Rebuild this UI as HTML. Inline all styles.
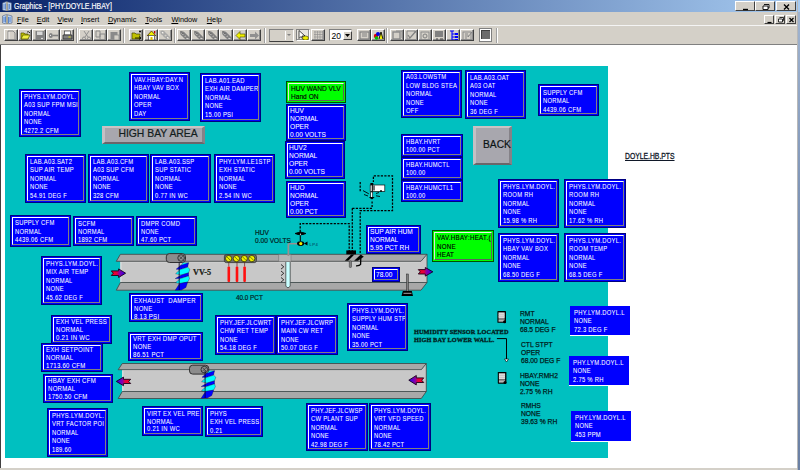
<!DOCTYPE html><html><head><meta charset="utf-8"><style>

*{margin:0;padding:0;box-sizing:border-box}
html,body{width:800px;height:470px;overflow:hidden;background:#fff}
body{position:relative;font-family:"Liberation Sans",sans-serif}
.a{position:absolute}
#title{left:0;top:0;width:797px;height:12px;background:linear-gradient(to right,#0a246a 0%,#a6caf0 100%)}
#title .tt{position:absolute;left:14.2px;top:1.2px;font-size:8.3px;line-height:11px;color:#fff;white-space:nowrap;transform-origin:0 0;transform:scaleX(0.845);-webkit-text-stroke:0.15px #fff}
#menu{left:0;top:12px;width:797px;height:14px;background:#d4d0c8;border-bottom:1px solid #f4f4f4}
#menu span{position:absolute;top:2.6px;font-size:7.3px;line-height:9px;color:#000;white-space:nowrap}
#menu u{text-decoration:underline;text-underline-offset:1px;text-decoration-thickness:0.7px}
#tool{left:0;top:26px;width:797px;height:19px;background:#d4d0c8;border-bottom:1px solid #808080}
.btn{position:absolute;top:2.6px;width:14px;height:12.6px;border-top:1px solid #fff;border-left:1px solid #fff;border-right:1px solid #404040;border-bottom:1px solid #404040;box-shadow:inset -1px -1px 0 #909090;overflow:hidden}
.btn svg{position:absolute;left:1px;top:0.5px}
.sep{position:absolute;top:2px;width:2px;height:15px;border-left:1px solid #a0a0a0;border-right:1px solid #fff}
#canvas{left:0;top:45px;width:797px;height:423px;background:#fff;border-left:1px solid #404040}
#cyan{left:5px;top:66px;width:603px;height:392px;background:#00c0c0}
.bx{position:absolute;background:#0000ff;border:1px solid #000080}
.bx::before{content:"";position:absolute;left:1px;top:1px;right:1px;bottom:1px;border-top:1px solid #fff;border-left:1px solid #fff;border-right:1px solid #808080;border-bottom:1px solid #808080}
.c{position:absolute;left:2px;top:2px;right:2px;bottom:2px;overflow:hidden}
.pl .c{left:0;top:0;right:0;bottom:0}
.bx.gr{background:#00ff00;border-color:#005000}
.bx.gr::before{border-top-color:#f0f0f0;border-left-color:#e0e0e0;border-right-color:#606060;border-bottom-color:#606060}
.bx .t,.pl .t{position:absolute;left:4px;white-space:nowrap;color:#fff;transform-origin:0 0;-webkit-text-stroke:0.05px #fff}
.bx.gr .t{-webkit-text-stroke:0.15px #000}
.bx.gr .t{color:#000}
.pl{position:absolute;background:#0000ff;border-bottom:1px solid #fff}
.gbtn{position:absolute;background:#a8a7ae;border-top:2px solid #cbc3c3;border-left:3px solid #c4c0c4;border-right:3px solid #858288;border-bottom:2px solid #6a666a}
.lbl{position:absolute;white-space:nowrap;color:#001c1c;transform-origin:0 0;-webkit-text-stroke:0.2px #001c1c}
#rside{left:796.5px;top:0;width:3.5px;height:470px;background:linear-gradient(to bottom,#a6caf0 0,#a6caf0 12px,#a0b4d0 12px,#8096b8 40%,#6a80a4 100%);border-left:1px solid #b8b8b8}
#bstrip{left:0;top:468px;width:797px;height:2px;background:#d4d0c8}

</style></head><body>
<div class="a" id="title"><div class="tt">Graphics - [PHY.DOYLE.HBAY]</div></div>
<svg class="a" style="left:2px;top:1px" width="10" height="10" viewBox="0 0 10 10"><path d="M0.5,2 l4,-1.5 l5,1.5 v7 l-5,1 l-4,-1z" fill="#b8d0f0" stroke="#506080" stroke-width="0.6"/><path d="M2,3 v5 M3.5,2.5 v6 M6,3 v6 M7.5,3 v5" stroke="#4070c0" stroke-width="0.7"/><path d="M5,1 v9" stroke="#a08040" stroke-width="0.9"/></svg>
<div class="a" style="left:734.5px;top:1.3px;width:20px;height:10px;background:#d4d0c8;border-top:1px solid #fff;border-left:1px solid #fff;border-right:1px solid #404040;border-bottom:1px solid #404040"><svg class="a" style="left:0;top:-0.5px" width="19" height="10"><path d="M7,7.5 h5" stroke="#000" stroke-width="1.4"/></svg></div>
<div class="a" style="left:755px;top:1.3px;width:20px;height:10px;background:#d4d0c8;border-top:1px solid #fff;border-left:1px solid #fff;border-right:1px solid #404040;border-bottom:1px solid #404040"><svg class="a" style="left:0;top:-0.5px" width="19" height="10"><path d="M8,2.5 h5 v3.5 h-1 M7,4 h5 v3.5 h-5z" stroke="#000" stroke-width="0.9" fill="#fff"/></svg></div>
<div class="a" style="left:776px;top:1.3px;width:20px;height:10px;background:#d4d0c8;border-top:1px solid #fff;border-left:1px solid #fff;border-right:1px solid #404040;border-bottom:1px solid #404040"><svg class="a" style="left:0;top:-0.5px" width="19" height="10"><path d="M7,2.5 l5,5 M12,2.5 l-5,5" stroke="#000" stroke-width="1.4"/></svg></div>
<div class="a" id="menu">
<span style="left:17px"><u>F</u>ile</span>
<span style="left:36.8px"><u>E</u>dit</span>
<span style="left:57.4px"><u>V</u>iew</span>
<span style="left:81px"><u>I</u>nsert</span>
<span style="left:107.9px"><u>D</u>ynamic</span>
<span style="left:145.2px"><u>T</u>ools</span>
<span style="left:171.4px"><u>W</u>indow</span>
<span style="left:206.8px"><u>H</u>elp</span>
</div>
<svg class="a" style="left:2px;top:14.4px" width="11" height="10" viewBox="0 0 11 10"><path d="M0.5,2 l4,-1.5 l5.5,1.5 v7 l-5.5,1 l-4,-1z" fill="#b8d0f0" stroke="#506080" stroke-width="0.6"/><path d="M2,3 v5 M3.5,2.5 v6 M6.5,3 v6 M8,3 v5" stroke="#4070c0" stroke-width="0.8"/><path d="M5,1 v9" stroke="#a08040" stroke-width="1"/></svg>
<div class="a" style="left:764px;top:14.8px;width:10px;height:9px;background:#d4d0c8;border-top:1px solid #fff;border-left:1px solid #fff;border-right:1px solid #404040;border-bottom:1px solid #404040"><svg class="a" style="left:0;top:0" width="9" height="8"><path d="M2.5,6.5 h4" stroke="#000" stroke-width="1.2"/></svg></div>
<div class="a" style="left:774.5px;top:14.8px;width:10px;height:9px;background:#d4d0c8;border-top:1px solid #fff;border-left:1px solid #fff;border-right:1px solid #404040;border-bottom:1px solid #404040"><svg class="a" style="left:0;top:0" width="9" height="8"><path d="M3.5,1.5 h4 v3 h-1 M2.5,3 h4 v3 h-4z" stroke="#000" stroke-width="0.8" fill="#fff"/></svg></div>
<div class="a" style="left:785.5px;top:14.8px;width:10px;height:9px;background:#d4d0c8;border-top:1px solid #fff;border-left:1px solid #fff;border-right:1px solid #404040;border-bottom:1px solid #404040"><svg class="a" style="left:0;top:0" width="9" height="8"><path d="M2.5,2 l4,4 M6.5,2 l-4,4" stroke="#000" stroke-width="1.2"/></svg></div>
<div class="a" id="tool">
<div class="btn" style="left:3.6px"><svg width="11" height="11" viewBox="0 0 11 11"><path d="M2,1 h5 l2,2 v7 h-7z" fill="none" stroke="#8a8a8a" stroke-width="1"/><path d="M3,2 v7" stroke="#ffffff" stroke-width="0.7"/></svg></div>
<div class="btn" style="left:18px"><svg width="11" height="11" viewBox="0 0 11 11"><path d="M1,3 h3 l1,1 h3 v5 h-7z" fill="#c0c000" stroke="#505000" stroke-width="0.7"/><path d="M1,9 l2,-4 h7 l-2,4z" fill="#f0f040" stroke="#505000" stroke-width="0.7"/><path d="M7,2 q2,-1 3,1" stroke="#000" stroke-width="0.8" fill="none"/></svg></div>
<div class="btn" style="left:32.4px"><svg width="11" height="11" viewBox="0 0 11 11"><rect x="1.5" y="1" width="8.5" height="9" fill="#808080"/><rect x="3" y="1.5" width="5.5" height="3.5" fill="#d8d8d8"/><circle cx="8" cy="8.5" r="0.8" fill="#fff"/></svg></div>
<div class="btn" style="left:46px"><svg width="11" height="11" viewBox="0 0 11 11"><ellipse cx="2.8" cy="5.5" rx="2" ry="2.6" fill="#808080"/><path d="M4.5,5.5 h6" stroke="#808080" stroke-width="1.6"/><circle cx="2.5" cy="5.3" r="0.6" fill="#fff"/></svg></div>
<div class="btn" style="left:60.4px"><svg width="11" height="11" viewBox="0 0 11 11"><rect x="2.5" y="1" width="6" height="4" fill="#fff" stroke="#404040" stroke-width="0.7"/><path d="M1,5 h9 v4 h-9z" fill="#808080" stroke="#303030" stroke-width="0.8"/><rect x="6.5" y="6.5" width="2" height="1" fill="#e0e000"/></svg></div>
<div class="btn" style="left:79px"><svg width="11" height="11" viewBox="0 0 11 11"><path d="M3,1 l4,6 M8,1 l-4,6" stroke="#8a8a8a" stroke-width="0.9"/><circle cx="3" cy="8.5" r="1.5" fill="none" stroke="#8a8a8a"/><circle cx="8" cy="8.5" r="1.5" fill="none" stroke="#8a8a8a"/></svg></div>
<div class="btn" style="left:93px"><svg width="11" height="11" viewBox="0 0 11 11"><path d="M1,1 h4 v6 h-4z M5,4 h5 v6 h-5z" fill="none" stroke="#8a8a8a" stroke-width="1"/></svg></div>
<div class="btn" style="left:107px"><svg width="11" height="11" viewBox="0 0 11 11"><rect x="1.5" y="2" width="7" height="7" fill="#8a8a8a"/><rect x="5" y="5" width="5" height="5" fill="#d4d0c8" stroke="#8a8a8a" stroke-width="0.8"/></svg></div>
<div class="btn" style="left:129px"><svg width="11" height="11" viewBox="0 0 11 11"><path d="M1,3 h3 l1,1 h4 v5 h-8z" fill="#c0c000" stroke="#404000" stroke-width="0.7"/><path d="M4,8 h6 M8,6.5 l2,1.5 l-2,1.5" stroke="#000" stroke-width="0.8" fill="none"/><circle cx="9" cy="1.5" r="1" fill="#000"/></svg></div>
<div class="btn" style="left:143.6px"><svg width="11" height="11" viewBox="0 0 11 11"><path d="M1,6 l4.5,-5 l4.5,5" fill="#f0f000" stroke="#604000" stroke-width="0.9"/><rect x="2.5" y="5.5" width="6" height="4.5" fill="#fff" stroke="#404040" stroke-width="0.7"/><rect x="4.5" y="7" width="2" height="3" fill="#e0c000"/><rect x="8" y="1" width="1.3" height="2.5" fill="#c00000"/></svg></div>
<div class="btn" style="left:158px"><svg width="11" height="11" viewBox="0 0 11 11"><g fill="none" stroke="#a8a8a8" stroke-width="1.3"><ellipse cx="3" cy="3" rx="2.3" ry="1.5" transform="rotate(40 3 3)"/><ellipse cx="5.5" cy="5.5" rx="2.3" ry="1.5" transform="rotate(40 5.5 5.5)"/><ellipse cx="8" cy="8" rx="2.3" ry="1.5" transform="rotate(40 8 8)"/></g><path d="M2,2 l1,1 M7,7 l1,1" stroke="#fff" stroke-width="0.7"/></svg></div>
<div class="btn" style="left:177px"><svg width="11" height="11" viewBox="0 0 11 11"><path d="M1.5,1.5 l3,2.5" stroke="#404040" stroke-width="1.6"/><g fill="none" stroke="#808080" stroke-width="1.4"><ellipse cx="4" cy="4" rx="2.3" ry="1.5" transform="rotate(40 4 4)"/><ellipse cx="6.3" cy="6.3" rx="2.3" ry="1.5" transform="rotate(40 6.3 6.3)"/><ellipse cx="8.5" cy="8.5" rx="2.2" ry="1.5" transform="rotate(40 8.5 8.5)"/></g><path d="M3,3.5 l1,1 M7.5,8 l1,1" stroke="#fff" stroke-width="0.8"/></svg></div>
<div class="btn" style="left:191px"><svg width="11" height="11" viewBox="0 0 11 11"><path d="M1.5,1.5 l3,2.5" stroke="#404040" stroke-width="1.6"/><g fill="none" stroke="#808080" stroke-width="1.4"><ellipse cx="4" cy="4" rx="2.3" ry="1.5" transform="rotate(40 4 4)"/><ellipse cx="6.3" cy="6.3" rx="2.3" ry="1.5" transform="rotate(40 6.3 6.3)"/><ellipse cx="8.5" cy="8.5" rx="2.2" ry="1.5" transform="rotate(40 8.5 8.5)"/></g><path d="M3,3.5 l1,1 M7.5,8 l1,1" stroke="#fff" stroke-width="0.8"/></svg></div>
<div class="btn" style="left:205px"><svg width="11" height="11" viewBox="0 0 11 11"><path d="M1.5,1.5 l3,2.5" stroke="#404040" stroke-width="1.6"/><g fill="none" stroke="#808080" stroke-width="1.4"><ellipse cx="4" cy="4" rx="2.3" ry="1.5" transform="rotate(40 4 4)"/><ellipse cx="6.3" cy="6.3" rx="2.3" ry="1.5" transform="rotate(40 6.3 6.3)"/><ellipse cx="8.5" cy="8.5" rx="2.2" ry="1.5" transform="rotate(40 8.5 8.5)"/></g><path d="M3,3.5 l1,1 M7.5,8 l1,1" stroke="#fff" stroke-width="0.8"/></svg></div>
<div class="btn" style="left:219px"><svg width="11" height="11" viewBox="0 0 11 11"><path d="M1.5,1.5 l3,2.5" stroke="#404040" stroke-width="1.6"/><g fill="none" stroke="#808080" stroke-width="1.4"><ellipse cx="4" cy="4" rx="2.3" ry="1.5" transform="rotate(40 4 4)"/><ellipse cx="6.3" cy="6.3" rx="2.3" ry="1.5" transform="rotate(40 6.3 6.3)"/><ellipse cx="8.5" cy="8.5" rx="2.2" ry="1.5" transform="rotate(40 8.5 8.5)"/></g><path d="M3,3.5 l1,1 M7.5,8 l1,1" stroke="#fff" stroke-width="0.8"/></svg></div>
<div class="btn" style="left:233px"><svg width="11" height="11" viewBox="0 0 11 11"><path d="M1,5.5 l4,-4 v2.5 h5 v3 h-5 v2.5z" fill="#f0f000" stroke="#404000" stroke-width="0.6"/></svg></div>
<div class="btn" style="left:247px"><svg width="11" height="11" viewBox="0 0 11 11"><path d="M10,5.5 l-4,-4 v2.5 h-5 v3 h5 v2.5z" fill="#909090"/></svg></div>
<div class="btn" style="left:310.6px"><svg width="11" height="11" viewBox="0 0 11 11"><path d="M1,2 h9 M1,4.5 h9 M1,7 h9 M1,9.5 h9 M2,1 v9 M4.5,1 v9 M7,1 v9 M9.5,1 v9" stroke="#8a8a8a" stroke-width="0.6"/></svg></div>
<div class="btn" style="left:357px"><svg width="11" height="11" viewBox="0 0 11 11"><rect x="1" y="2" width="9" height="7" fill="none" stroke="#808080" stroke-width="1.2"/><path d="M3,4 h5 M3,6 h5" stroke="#808080"/></svg></div>
<div class="btn" style="left:371px"><svg width="11" height="11" viewBox="0 0 11 11"><circle cx="3" cy="6" r="2.2" fill="#e00000"/><circle cx="5" cy="4" r="2" fill="#0000e0"/><circle cx="3.5" cy="8" r="1.8" fill="#00c000"/><path d="M6,9 l2,-7 l2,7" stroke="#000" stroke-width="0.9" fill="#f0f000"/></svg></div>
<div class="btn" style="left:390px"><svg width="11" height="11" viewBox="0 0 11 11"><rect x="1" y="2" width="7" height="7" fill="none" stroke="#8a8a8a" stroke-width="1.4"/><path d="M4,1 h6 v7" stroke="#8a8a8a" fill="none"/></svg></div>
<div class="btn" style="left:404px"><svg width="11" height="11" viewBox="0 0 11 11"><path d="M1,1 h8 v2 M1,1 v8 h3" stroke="#8a8a8a" fill="none"/><path d="M2,5 l2,3 l6,-7" stroke="#808080" stroke-width="1.2" fill="none"/></svg></div>
<div class="btn" style="left:418px"><svg width="11" height="11" viewBox="0 0 11 11"><rect x="1" y="2" width="8" height="8" fill="none" stroke="#8a8a8a" stroke-width="1"/><circle cx="5" cy="6" r="2" fill="none" stroke="#808080"/></svg></div>
<div class="btn" style="left:432px"><svg width="11" height="11" viewBox="0 0 11 11"><rect x="1" y="1" width="8" height="6" fill="#808080"/><path d="M2,9 h2 M6,9 h3" stroke="#404040" stroke-width="1.2"/></svg></div>
<div class="btn" style="left:446.4px"><svg width="11" height="11" viewBox="0 0 11 11"><path d="M2,1 h4 M4,1 v9 M4,4 h3 M4,7 h3 M4,10 h3" stroke="#0000ff" stroke-width="1.1" fill="none"/><rect x="7" y="3" width="3" height="2" fill="#0000ff"/><rect x="7" y="6" width="3" height="2" fill="#0000ff"/><rect x="7" y="9" width="3" height="2" fill="#0000ff"/></svg></div>
<div class="btn" style="left:460.4px"><svg width="11" height="11" viewBox="0 0 11 11"><rect x="1" y="2" width="8" height="8" fill="none" stroke="#8a8a8a" stroke-width="1"/><path d="M3,4 h3 M3,6 h4 M3,8 h2 M6,7 l4,-5" stroke="#808080" stroke-width="0.9"/></svg></div>
<div class="btn" style="left:296px;background:#e8e6e0;border-top-color:#808080;border-left-color:#808080;border-right-color:#fff;border-bottom-color:#fff"><svg width="11" height="11" viewBox="0 0 11 11"><path d="M1,0.5 v8 l2,-2 l2,3 l1,-0.5 l-2,-3 h3z" fill="#fff" stroke="#000" stroke-width="0.7"/><ellipse cx="7.5" cy="8" rx="3" ry="2" fill="#f0f000" stroke="#404000" stroke-width="0.6"/></svg></div>
<div class="a" style="left:269.4px;top:3px;width:24.5px;height:12.6px;background:#d4d0c8;border-top:1px solid #808080;border-left:1px solid #808080;border-right:1px solid #fff;border-bottom:1.5px solid #404040"><div class="a" style="left:15px;top:1px;width:1px;height:9px;background:#fff"></div><svg class="a" style="left:17px;top:4px" width="5" height="3"><path d="M0,0 h4 l-2,2z" fill="#808080"/></svg></div>
<div class="a" style="left:329px;top:3px;width:23px;height:12px;background:#fff;border-top:1px solid #808080;border-left:1px solid #808080;border-right:1px solid #d4d0c8;border-bottom:1px solid #d4d0c8"><div class="a" style="left:1.5px;top:0.8px;font-size:8.5px;line-height:10px;color:#000">20</div><div class="a" style="left:12.5px;top:0.5px;width:9px;height:9.5px;background:#d4d0c8;border-top:1px solid #fff;border-left:1px solid #fff;border-right:1px solid #404040;border-bottom:1px solid #404040"><svg class="a" style="left:1.5px;top:2.5px" width="6" height="4"><path d="M0,0 h5 l-2.5,3z" fill="#000"/></svg></div></div>
<div class="a" style="left:479px;top:2.4px;width:13px;height:13.2px;background:#fff;border:1px solid #808080"><div class="a" style="left:1px;top:1px;width:9px;height:9px;background:#6c6c6c;border-top:1px solid #404040;border-left:1px solid #404040"></div></div>
<div class="sep" style="left:75.8px"></div>
<div class="sep" style="left:122.8px"></div>
<div class="sep" style="left:173.5px"></div>
<div class="sep" style="left:263.6px"></div>
<div class="sep" style="left:386px"></div>
<div class="sep" style="left:495.5px"></div>
</div>
<div class="a" id="rside"></div>
<div class="a" id="canvas"></div>
<div class="a" id="bstrip"></div>
<div class="a" id="cyan"></div>
<div class="gbtn" style="left:102px;top:126px;width:103px;height:18px"></div>
<div class="gbtn" style="left:473px;top:126px;width:39px;height:39px"></div>
<svg class="a" style="left:0;top:0" width="800" height="470" viewBox="0 0 800 470">
<defs><linearGradient id="gR" x1="0" x2="1" y1="0" y2="0"><stop offset="0" stop-color="#ff0020"/><stop offset="0.4" stop-color="#e00040"/><stop offset="0.55" stop-color="#9000a0"/><stop offset="1" stop-color="#2000ff"/></linearGradient><linearGradient id="gL" x1="1" x2="0" y1="0" y2="0"><stop offset="0" stop-color="#ff0020"/><stop offset="0.4" stop-color="#e00040"/><stop offset="0.55" stop-color="#9000a0"/><stop offset="1" stop-color="#2000ff"/></linearGradient></defs>
<polygon points="120.4,261.3 421,261.3 427,254.3 427,282.5 120.4,282.5" fill="#c8c8c8"/>
<line x1="120.9" y1="261.3" x2="120.9" y2="282.5" stroke="#e8e8e8" stroke-width="1"/>
<line x1="120.4" y1="261.8" x2="421" y2="261.8" stroke="#dcdcdc" stroke-width="1"/>
<polygon points="120.4,254.3 427,254.3 421,261.3 116.3,261.3" fill="#a8a8a8" stroke="#404040" stroke-width="0.8"/>
<polygon points="120.4,282.5 427,282.5 421,290.2 116.3,290.2" fill="#a8a8a8" stroke="#404040" stroke-width="0.8"/>
<line x1="427" y1="254.3" x2="427" y2="282.5" stroke="#404040" stroke-width="0.8"/>
<polygon points="122.3,369.7 421.3,369.7 426.3,363.5 426.3,391.5 122.3,391.5" fill="#c8c8c8"/>
<line x1="122.8" y1="369.7" x2="122.8" y2="391.5" stroke="#e8e8e8" stroke-width="1"/>
<line x1="122.3" y1="370.2" x2="421.3" y2="370.2" stroke="#dcdcdc" stroke-width="1"/>
<polygon points="122.3,363.5 426.3,363.5 421.3,369.7 118.2,369.7" fill="#a8a8a8" stroke="#404040" stroke-width="0.8"/>
<polygon points="122.3,391.5 426.3,391.5 421.3,398.5 118.2,398.5" fill="#a8a8a8" stroke="#404040" stroke-width="0.8"/>
<line x1="426.3" y1="363.5" x2="426.3" y2="391.5" stroke="#404040" stroke-width="0.8"/>
<polygon points="111.3,270.9 118.6,270.9 118.6,268.9 125.6,273.2 118.6,277.5 118.6,275.5 111.3,275.5 113.3,273.2" fill="url(#gR)" stroke="#180018" stroke-width="0.9" stroke-linejoin="miter"/>
<polygon points="418.3,269.6 425.3,269.6 425.3,267.5 432.9,271.8 425.3,276.1 425.3,274.0 418.3,274.0 420.3,271.8" fill="url(#gR)" stroke="#180018" stroke-width="0.9" stroke-linejoin="miter"/>
<polygon points="130.7,379.29999999999995 123.5,379.29999999999995 123.5,377.09999999999997 116.3,381.4 123.5,385.7 123.5,383.5 130.7,383.5 128.7,381.4" fill="url(#gL)" stroke="#180018" stroke-width="0.9" stroke-linejoin="miter"/>
<polygon points="423.7,377.9 416.3,377.9 416.3,375.5 408.8,380.2 416.3,384.9 416.3,382.5 423.7,382.5 421.7,380.2" fill="url(#gL)" stroke="#180018" stroke-width="0.9" stroke-linejoin="miter"/>
<rect x="166.3" y="253.6" width="19.2" height="8.9" rx="3.2" fill="#8c8c8c" stroke="#303030" stroke-width="1"/>
<circle cx="181.10000000000002" cy="258.0" r="3.3" fill="#909090" stroke="#202020" stroke-width="0.8"/>
<path d="M179.3,256.1 l3.5,3.5 M182.8,256.1 l-3.5,3.5" stroke="#202020" stroke-width="0.6"/>
<polygon points="183.20,262.70 188.60,262.70 186.30,265.20 180.50,266.10" fill="#00ffff" stroke="#000030" stroke-width="0.3"/>
<polygon points="176.10,269.20 180.50,265.60 188.60,262.80 187.70,267.10 180.10,269.60" fill="#0000ff" stroke="#000030" stroke-width="0.3"/>
<polygon points="175.60,273.70 180.10,269.60 187.70,267.20 189.90,269.20 188.60,272.80 181.40,275.00" fill="#00ffff" stroke="#000030" stroke-width="0.3"/>
<polygon points="175.20,278.60 181.40,275.00 188.60,272.80 188.60,275.90 180.50,278.60" fill="#0000ff" stroke="#000030" stroke-width="0.3"/>
<polygon points="175.60,282.60 180.50,278.60 188.60,275.90 189.50,278.60 187.70,282.10 179.60,283.50" fill="#00ffff" stroke="#000030" stroke-width="0.3"/>
<polygon points="175.20,290.30 179.60,283.50 187.70,282.10 185.90,287.50 181.40,290.10" fill="#0000ff" stroke="#000030" stroke-width="0.3"/>
<line x1="179.2" y1="262.5" x2="179.2" y2="290.0" stroke="#000020" stroke-width="0.8"/>
<rect x="189.5" y="365.2" width="19.2" height="8.9" rx="3.2" fill="#8c8c8c" stroke="#303030" stroke-width="1"/>
<circle cx="204.3" cy="369.59999999999997" r="3.3" fill="#909090" stroke="#202020" stroke-width="0.8"/>
<path d="M202.5,367.7 l3.5,3.5 M206.0,367.7 l-3.5,3.5" stroke="#202020" stroke-width="0.6"/>
<polygon points="209.10,370.70 214.50,370.70 212.20,373.20 206.40,374.10" fill="#00ffff" stroke="#000030" stroke-width="0.3"/>
<polygon points="202.00,377.20 206.40,373.60 214.50,370.80 213.60,375.10 206.00,377.60" fill="#0000ff" stroke="#000030" stroke-width="0.3"/>
<polygon points="201.50,381.70 206.00,377.60 213.60,375.20 215.80,377.20 214.50,380.80 207.30,383.00" fill="#00ffff" stroke="#000030" stroke-width="0.3"/>
<polygon points="201.10,386.60 207.30,383.00 214.50,380.80 214.50,383.90 206.40,386.60" fill="#0000ff" stroke="#000030" stroke-width="0.3"/>
<polygon points="201.50,390.60 206.40,386.60 214.50,383.90 215.40,386.60 213.60,390.10 205.50,391.50" fill="#00ffff" stroke="#000030" stroke-width="0.3"/>
<polygon points="201.10,398.30 205.50,391.50 213.60,390.10 211.80,395.50 207.30,398.10" fill="#0000ff" stroke="#000030" stroke-width="0.3"/>
<line x1="205.1" y1="370.5" x2="205.1" y2="398.0" stroke="#000020" stroke-width="0.8"/>
<rect x="224.4" y="254.6" width="32" height="8" rx="2" fill="#707070" stroke="#303030" stroke-width="0.8"/>
<circle cx="228.6" cy="258.6" r="3.1" fill="#f0f000" stroke="#202000" stroke-width="0.7"/>
<path d="M227.1,257 l3,3" stroke="#303000" stroke-width="0.6"/>
<circle cx="236.4" cy="258.6" r="3.1" fill="#f0f000" stroke="#202000" stroke-width="0.7"/>
<path d="M234.9,257 l3,3" stroke="#303000" stroke-width="0.6"/>
<circle cx="244.2" cy="258.6" r="3.1" fill="#f0f000" stroke="#202000" stroke-width="0.7"/>
<path d="M242.7,257 l3,3" stroke="#303000" stroke-width="0.6"/>
<circle cx="251.8" cy="258.6" r="3.1" fill="#f0f000" stroke="#202000" stroke-width="0.7"/>
<path d="M250.3,257 l3,3" stroke="#303000" stroke-width="0.6"/>
<line x1="228.8" y1="262.5" x2="228.8" y2="266.5" stroke="#600000" stroke-width="0.6"/>
<rect x="227.5" y="266.5" width="2.6" height="15.5" rx="1" fill="#ff1010"/>
<line x1="237" y1="262.5" x2="237" y2="266.5" stroke="#600000" stroke-width="0.6"/>
<rect x="235.7" y="266.5" width="2.6" height="15.5" rx="1" fill="#ff1010"/>
<line x1="244.6" y1="262.5" x2="244.6" y2="266.5" stroke="#600000" stroke-width="0.6"/>
<rect x="243.29999999999998" y="266.5" width="2.6" height="15.5" rx="1" fill="#ff1010"/>
<rect x="278.8" y="254.6" width="12.2" height="7" fill="#b4b4b4" stroke="#707070" stroke-width="0.5"/>
<path d="M288.4,243.7 L288.4,256" stroke="#9a9090" stroke-width="1.8" fill="none"/>
<path d="M288.4,243.7 L298,243.7" stroke="#9a9090" stroke-width="1.5" fill="none"/>
<path d="M285.8,262 L285.8,286 Q288,289.5 290.2,286 L290.2,262" fill="#c8ffff" stroke="#404040" stroke-width="0.8"/>
<path d="M281,264.5 l2.8,2.3 l-2.8,2.3" stroke="#202020" stroke-width="0.9" fill="none"/>
<path d="M281,271 l2.8,2.3 l-2.8,2.3" stroke="#202020" stroke-width="0.9" fill="none"/>
<path d="M281,277.5 l2.8,2.3 l-2.8,2.3" stroke="#202020" stroke-width="0.9" fill="none"/>
<path d="M295,233.5 Q300.5,230.5 306,233.5 Q300.5,236.5 295,233.5 Z" fill="#000" stroke="#000" stroke-width="0.8"/>
<circle cx="300.5" cy="234.2" r="0.6" fill="#fff"/>
<path d="M300.3,235.5 L300.3,241" stroke="#000" stroke-width="1.1"/>
<ellipse cx="300.6" cy="243.6" rx="3.6" ry="2.3" fill="#000"/>
<circle cx="300.8" cy="243.6" r="1.6" fill="#f0f000"/>
<path d="M304,243.6 L307.5,241.6 L307.5,245.6 Z" fill="#000"/>
<text x="309.5" y="245.6" font-size="4.2" font-family="Liberation Sans" fill="#003050" letter-spacing="0.5">LP4</text>
<path d="M300.2,232 L300.2,223.5 L349.2,223.5 L349.2,253" stroke="#000" stroke-width="1.25" fill="none" stroke-dasharray="2.2,1.3"/>
<path d="M352.3,208.3 L372.1,208.3 L372.1,200" stroke="#000" stroke-width="1.25" fill="none" stroke-dasharray="2.2,1.3"/>
<path d="M352.3,208.3 L352.3,253" stroke="#000" stroke-width="1.25" fill="none" stroke-dasharray="2.2,1.3"/>
<path d="M360.2,253 L360.2,210.6 L392.5,210.6 L392.5,175.8 L373.4,175.8 L373.4,182" stroke="#000" stroke-width="1.25" fill="none" stroke-dasharray="2.2,1.3"/>
<path d="M360.2,182 L360.2,192.5" stroke="#000" stroke-width="1.25" fill="none" stroke-dasharray="2.2,1.3"/>
<path d="M370.4,183 L373.3,183 L373.3,185.5 L370.4,185.5 Z" fill="#000"/>
<rect x="370.2" y="185" width="14.6" height="6.4" fill="#ffffff" stroke="#101010" stroke-width="0.7"/>
<path d="M372.3,185 l0,6.4 M374,185.5 l0,5" stroke="#000" stroke-width="1.1"/>
<rect x="380" y="190.3" width="2" height="1.4" fill="#000"/>
<rect x="370.7" y="192" width="2" height="6.5" fill="#ffffff" stroke="#000" stroke-width="0.6"/>
<path d="M363,190.6 L368.8,193.8 M364,194.5 L368,196 M376,193.5 L379,192.5 M376,195.8 L380,196.5" stroke="#000" stroke-width="0.9" fill="none"/>
<path d="M368.8,197 L374.7,197 L372,199.5 Z" fill="#000"/>
<rect x="346.3" y="250.4" width="9.7" height="3.9" fill="#000"/>
<path d="M344.8,260.8 L351.2,254.6 L354.4,254.6 L348.2,260.8 Z" fill="#000"/>
<path d="M354.1,260.8 L360.8,254.5 L363.8,256.8 L357.9,260.8 Z" fill="#000"/>
<rect x="349.3" y="260.8" width="2.2" height="6.7" rx="0.8" fill="#808080" stroke="#303030" stroke-width="0.5"/>
<path d="M360.8,257.5 L360.6,264.4 Q359.5,266 356,265.8" stroke="#000" stroke-width="1.3" fill="none"/>
<rect x="406.5" y="274" width="1.8" height="17.5" fill="#808080" stroke="#202020" stroke-width="0.5"/>
<path d="M401.5,296 L402.8,291 L411.8,291 L413,296 Z" fill="#000"/>
<path d="M403.5,293.3 l8,0" stroke="#d0d0d0" stroke-width="0.8"/>
<rect x="497.4" y="311.1" width="8.6" height="11.7" rx="0.6" fill="#000"/>
<rect x="498.5" y="312.40000000000003" width="6.2" height="6.2" fill="#dcdcdc"/>
<path d="M498.5,314.6 h6.2 M498.5,316.6 h6.2" stroke="#b8b8b8" stroke-width="0.5"/>
<rect x="498.5" y="319.3" width="6.2" height="2.4" fill="#b8b8b8"/>
<circle cx="504.59999999999997" cy="321.70000000000005" r="1.5" fill="#000"/>
<rect x="497.8" y="372" width="8.6" height="11.7" rx="0.6" fill="#000"/>
<rect x="498.90000000000003" y="373.3" width="6.2" height="6.2" fill="#dcdcdc"/>
<path d="M498.90000000000003,375.5 h6.2 M498.90000000000003,377.5 h6.2" stroke="#b8b8b8" stroke-width="0.5"/>
<rect x="498.90000000000003" y="380.2" width="6.2" height="2.4" fill="#b8b8b8"/>
<circle cx="505.0" cy="382.6" r="1.5" fill="#000"/>
<path d="M496.9,338.6 L506.5,338.6 L506.5,359.5" stroke="#000" stroke-width="1" fill="none"/>
<path d="M504.5,359 L508.5,359 L506.5,362 Z" fill="#fff" stroke="#000" stroke-width="0.6"/>
</svg>
<div class="bx" style="left:19px;top:89px;width:62px;height:48px"><div class="c"><div class="t" style="font-size:7.4px;line-height:8.6px;top:0.5px;left:1.7999999999999998px;letter-spacing:0.35px;transform:scaleX(0.79)">PHYS.LYM.DOYL.<br>A03 SUP FPM MSI<br>NORMAL<br>NONE<br>4272.2 CFM</div></div></div>
<div class="bx" style="left:129px;top:72px;width:61px;height:49px"><div class="c"><div class="t" style="font-size:7.4px;line-height:8.6px;top:0.5px;left:1.7999999999999998px;letter-spacing:0.35px;transform:scaleX(0.79)">VAV.HBAY:DAY.N<br>HBAY VAV BOX<br>NORMAL<br>OPER<br>DAY</div></div></div>
<div class="bx" style="left:200px;top:73px;width:61px;height:49px"><div class="c"><div class="t" style="font-size:7.4px;line-height:8.6px;top:0.5px;left:1.7999999999999998px;letter-spacing:0.35px;transform:scaleX(0.79)">LAB.A01.EAD<br>EXH AIR DAMPER<br>NORMAL<br>NONE<br>15.00 PSI</div></div></div>
<div class="bx gr" style="left:286px;top:81px;width:60px;height:22px"><div class="c"><div class="t" style="font-size:7.6px;line-height:8.0px;top:1.0px;left:1.7000000000000002px;letter-spacing:0px;transform:scaleX(0.87)">HUV WAND VLV<br>Hand ON</div></div></div>
<div class="bx" style="left:286px;top:104px;width:60px;height:37px"><div class="c"><div class="t" style="font-size:7.6px;line-height:8.0px;top:0.3999999999999999px;left:1.2999999999999998px;letter-spacing:0px;transform:scaleX(0.87)">HUV<br>NORMAL<br>OPER<br>0.00 VOLTS</div></div></div>
<div class="bx" style="left:285px;top:141px;width:60px;height:38px"><div class="c"><div class="t" style="font-size:7.6px;line-height:8.0px;top:0.3999999999999999px;left:1.2999999999999998px;letter-spacing:0px;transform:scaleX(0.87)">HUV2<br>NORMAL<br>OPER<br>0.00 VOLTS</div></div></div>
<div class="bx" style="left:286px;top:181px;width:60px;height:37px"><div class="c"><div class="t" style="font-size:7.6px;line-height:8.0px;top:0.3999999999999999px;left:1.2999999999999998px;letter-spacing:0px;transform:scaleX(0.87)">HUO<br>NORMAL<br>OPER<br>0.00 PCT</div></div></div>
<div class="bx" style="left:401px;top:70px;width:61px;height:48px"><div class="c"><div class="t" style="font-size:7.4px;line-height:8.6px;top:0.10000000000000009px;left:1.7999999999999998px;letter-spacing:0.35px;transform:scaleX(0.79)">A03.LOWSTM<br>LOW BLDG STEA<br>NORMAL<br>NONE<br>OFF</div></div></div>
<div class="bx" style="left:465px;top:70px;width:61px;height:49px"><div class="c"><div class="t" style="font-size:7.4px;line-height:8.6px;top:0.6000000000000001px;left:1.7999999999999998px;letter-spacing:0.35px;transform:scaleX(0.79)">LAB.A03.OAT<br>A03 OAT<br>NORMAL<br>NONE<br>36 DEG F</div></div></div>
<div class="bx" style="left:538px;top:84px;width:61px;height:32px"><div class="c"><div class="t" style="font-size:7.4px;line-height:8.6px;top:1.5px;left:1.7999999999999998px;letter-spacing:0.35px;transform:scaleX(0.79)">SUPPLY CFM<br>NORMAL<br>4439.06 CFM</div></div></div>
<div class="bx" style="left:401px;top:134px;width:62px;height:23px"><div class="c"><div class="t" style="font-size:7.4px;line-height:8.4px;top:0.7999999999999998px;left:1.7999999999999998px;letter-spacing:0.35px;transform:scaleX(0.79)">HBAY.HVRT<br>100.00 PCT</div></div></div>
<div class="bx" style="left:401px;top:157px;width:62px;height:23px"><div class="c"><div class="t" style="font-size:7.4px;line-height:8.2px;top:0.7999999999999998px;left:1.7999999999999998px;letter-spacing:0.35px;transform:scaleX(0.79)">HBAY.HUMCTL<br>100.00</div></div></div>
<div class="bx" style="left:401px;top:180px;width:62px;height:22px"><div class="c"><div class="t" style="font-size:7.4px;line-height:8.2px;top:0.6000000000000001px;left:1.7999999999999998px;letter-spacing:0.35px;transform:scaleX(0.79)">HBAY.HUMCTL1<br>100.00</div></div></div>
<div class="bx" style="left:25px;top:154px;width:61px;height:49px"><div class="c"><div class="t" style="font-size:7.4px;line-height:8.6px;top:0.5px;left:1.7999999999999998px;letter-spacing:0.35px;transform:scaleX(0.79)">LAB.A03.SAT2<br>SUP AIR TEMP<br>NORMAL<br>NONE<br>54.91 DEG F</div></div></div>
<div class="bx" style="left:88px;top:154px;width:61px;height:49px"><div class="c"><div class="t" style="font-size:7.4px;line-height:8.6px;top:0.5px;left:1.7999999999999998px;letter-spacing:0.35px;transform:scaleX(0.79)">LAB.A03.CFM<br>A03 SUP CFM<br>NORMAL<br>NONE<br>328 CFM</div></div></div>
<div class="bx" style="left:150px;top:154px;width:61px;height:49px"><div class="c"><div class="t" style="font-size:7.4px;line-height:8.6px;top:0.5px;left:1.7999999999999998px;letter-spacing:0.35px;transform:scaleX(0.79)">LAB.A03.SSP<br>SUP STATIC<br>NORMAL<br>NONE<br>0.77 IN WC</div></div></div>
<div class="bx" style="left:214px;top:154px;width:61px;height:49px"><div class="c"><div class="t" style="font-size:7.4px;line-height:8.6px;top:0.5px;left:1.7999999999999998px;letter-spacing:0.35px;transform:scaleX(0.79)">PHY.LYM.LE1STP<br>EXH STATIC<br>NORMAL<br>NONE<br>2.54 IN WC</div></div></div>
<div class="bx" style="left:10px;top:215px;width:61px;height:32px"><div class="c"><div class="t" style="font-size:7.4px;line-height:8.6px;top:1.0px;left:1.7999999999999998px;letter-spacing:0.35px;transform:scaleX(0.79)">SUPPLY CFM<br>NORMAL<br>4439.06 CFM</div></div></div>
<div class="bx" style="left:73px;top:216px;width:61px;height:30px"><div class="c"><div class="t" style="font-size:7.4px;line-height:7.9px;top:1.2999999999999998px;left:1.7999999999999998px;letter-spacing:0.35px;transform:scaleX(0.79)">SCFM<br>NORMAL<br>1892 CFM</div></div></div>
<div class="bx" style="left:136px;top:216px;width:61px;height:30px"><div class="c"><div class="t" style="font-size:7.4px;line-height:7.9px;top:1.0px;left:1.7999999999999998px;letter-spacing:0.35px;transform:scaleX(0.79)">DMPR COMD<br>NONE<br>47.60 PCT</div></div></div>
<div class="bx" style="left:498px;top:179px;width:61px;height:49px"><div class="c"><div class="t" style="font-size:7.4px;line-height:8.6px;top:0.5px;left:1.7999999999999998px;letter-spacing:0.35px;transform:scaleX(0.79)">PHYS.LYM.DOYL.<br>ROOM RH<br>NORMAL<br>NONE<br>15.98 % RH</div></div></div>
<div class="bx" style="left:564px;top:179px;width:62px;height:49px"><div class="c"><div class="t" style="font-size:7.4px;line-height:8.6px;top:0.5px;left:1.7999999999999998px;letter-spacing:0.35px;transform:scaleX(0.79)">PHYS.LYM.DOYL.<br>ROOM RH<br>NORMAL<br>NONE<br>17.62 % RH</div></div></div>
<div class="bx gr" style="left:432px;top:230px;width:62px;height:32px"><div class="c"><div class="t" style="font-size:7.4px;line-height:8.6px;top:1.0px;left:1.7999999999999998px;letter-spacing:0.35px;transform:scaleX(0.835)">VAV.HBAY:HEAT.(<br>NONE<br>HEAT</div></div></div>
<div class="bx" style="left:366px;top:225px;width:55px;height:29px"><div class="c"><div class="t" style="font-size:7.6px;line-height:7.8px;top:0.3999999999999999px;left:1.2999999999999998px;letter-spacing:0px;transform:scaleX(0.87)">SUP AIR HUM<br>NORMAL<br>5.95 PCT RH</div></div></div>
<div class="bx" style="left:498px;top:233px;width:61px;height:49px"><div class="c"><div class="t" style="font-size:7.4px;line-height:8.6px;top:0.5px;left:1.7999999999999998px;letter-spacing:0.35px;transform:scaleX(0.79)">PHYS.LYM.DOYL.<br>HBAY VAV BOX<br>NORMAL<br>NONE<br>68.50 DEG F</div></div></div>
<div class="bx" style="left:564px;top:233px;width:62px;height:49px"><div class="c"><div class="t" style="font-size:7.4px;line-height:8.6px;top:0.5px;left:1.7999999999999998px;letter-spacing:0.35px;transform:scaleX(0.79)">PHYS.LYM.DOYL.<br>ROOM TEMP<br>NORMAL<br>NONE<br>68.5 DEG F</div></div></div>
<div class="bx" style="left:41px;top:256px;width:61px;height:49px"><div class="c"><div class="t" style="font-size:7.4px;line-height:8.6px;top:0.5px;left:1.7999999999999998px;letter-spacing:0.35px;transform:scaleX(0.79)">PHYS.LYM.DOYL.<br>MIX AIR TEMP<br>NORMAL<br>NONE<br>45.62 DEG F</div></div></div>
<div class="bx" style="left:129px;top:293px;width:74px;height:29px"><div class="c"><div class="t" style="font-size:7.8px;line-height:7.95px;top:0.7999999999999998px;left:1.7999999999999998px;letter-spacing:0.35px;transform:scaleX(0.775)">EXHAUST&nbsp; DAMPER<br>NONE<br>8.13 PSI</div></div></div>
<div class="bx" style="left:347px;top:303px;width:61px;height:48px"><div class="c"><div class="t" style="font-size:7.4px;line-height:8.6px;top:0.5px;left:1.7999999999999998px;letter-spacing:0.35px;transform:scaleX(0.79)">PHYS.LYM.DOYL.<br>SUPPLY HUM STP<br>NORMAL<br>NONE<br>35.00 PCT</div></div></div>
<div class="bx" style="left:51px;top:315px;width:61px;height:29px"><div class="c"><div class="t" style="font-size:7.8px;line-height:7.95px;top:0.0px;left:1.7999999999999998px;letter-spacing:0.35px;transform:scaleX(0.775)">EXH VEL PRESS<br>NORMAL<br>0.21 IN WC</div></div></div>
<div class="bx" style="left:41px;top:343px;width:62px;height:29px"><div class="c"><div class="t" style="font-size:7.8px;line-height:7.95px;top:0.0px;left:1.7999999999999998px;letter-spacing:0.35px;transform:scaleX(0.775)">EXH SETPOINT<br>NORMAL<br>1713.60 CFM</div></div></div>
<div class="bx" style="left:128px;top:332px;width:75px;height:29px"><div class="c"><div class="t" style="font-size:7.8px;line-height:7.95px;top:0.0px;left:1.7999999999999998px;letter-spacing:0.35px;transform:scaleX(0.775)">VRT EXH DMP OPUT<br>NONE<br>86.51 PCT</div></div></div>
<div class="bx" style="left:215px;top:315px;width:61px;height:40px"><div class="c"><div class="t" style="font-size:7.4px;line-height:8.6px;top:0.5px;left:1.7999999999999998px;letter-spacing:0.35px;transform:scaleX(0.79)">PHY.JEF.JLCWRT<br>CHW RET TEMP<br>NONE<br>54.18 DEG F</div></div></div>
<div class="bx" style="left:276px;top:315px;width:62px;height:40px"><div class="c"><div class="t" style="font-size:7.4px;line-height:8.6px;top:0.5px;left:1.7999999999999998px;letter-spacing:0.35px;transform:scaleX(0.79)">PHY.JEF.JLCWRP<br>MAIN CW RET<br>NONE<br>50.07 DEG F</div></div></div>
<div class="bx" style="left:43px;top:374px;width:70px;height:29px"><div class="c"><div class="t" style="font-size:7.8px;line-height:7.95px;top:0.0px;left:1.7999999999999998px;letter-spacing:0.35px;transform:scaleX(0.775)">HBAY EXH CFM<br>NORMAL<br>1750.50 CFM</div></div></div>
<div class="bx" style="left:47px;top:408px;width:61px;height:49px"><div class="c"><div class="t" style="font-size:7.4px;line-height:8.6px;top:0.5px;left:1.7999999999999998px;letter-spacing:0.35px;transform:scaleX(0.79)">PHYS.LYM.DOYL.<br>VRT FACTOR POI<br>NORMAL<br>NONE<br>189.60</div></div></div>
<div class="bx" style="left:142px;top:406px;width:61px;height:30px"><div class="c"><div class="t" style="font-size:7.4px;line-height:7.7px;top:1.0px;left:1.7999999999999998px;letter-spacing:0.35px;transform:scaleX(0.79)">VIRT EX VEL PRE<br>NORMAL<br>0.21 IN WC</div></div></div>
<div class="bx" style="left:205px;top:406px;width:58px;height:31px"><div class="c"><div class="t" style="font-size:7.4px;line-height:8.6px;top:0.5px;left:1.7999999999999998px;letter-spacing:0.35px;transform:scaleX(0.79)">PHYS<br>EXH VEL PRESS<br>0.21</div></div></div>
<div class="bx" style="left:306px;top:403px;width:62px;height:48px"><div class="c"><div class="t" style="font-size:7.4px;line-height:8.6px;top:0.5px;left:1.7999999999999998px;letter-spacing:0.35px;transform:scaleX(0.79)">PHY.JEF.JLCWSP<br>CW PLANT SUP<br>NORMAL<br>NONE<br>42.98 DEG F</div></div></div>
<div class="bx" style="left:369px;top:403px;width:62px;height:48px"><div class="c"><div class="t" style="font-size:7.4px;line-height:8.6px;top:0.5px;left:1.7999999999999998px;letter-spacing:0.35px;transform:scaleX(0.79)">PHYS.LYM.DOYL.<br>VRT VFD SPEED<br>NORMAL<br>NONE<br>78.42 PCT</div></div></div>
<div class="pl" style="left:570px;top:306px;width:60px;height:30px"><div class="c"><div class="t" style="font-size:7.4px;line-height:8.6px;top:2.8px;left:4px;letter-spacing:0.35px;transform:scaleX(0.79)">PHY.LYM.DOYL.L<br>NONE<br>72.3 DEG F</div></div></div>
<div class="pl" style="left:569px;top:356px;width:60px;height:30px"><div class="c"><div class="t" style="font-size:7.4px;line-height:8.6px;top:2.8px;left:4px;letter-spacing:0.35px;transform:scaleX(0.79)">PHY.LYM.DOYL.L<br>NONE<br>2.75 % RH</div></div></div>
<div class="pl" style="left:571px;top:411px;width:60px;height:31px"><div class="c"><div class="t" style="font-size:7.4px;line-height:8.6px;top:2.8px;left:4px;letter-spacing:0.35px;transform:scaleX(0.79)">PHY.LYM.DOYL.L<br>NONE<br>453 PPM</div></div></div>
<div class="bx" style="left:372px;top:267px;width:28px;height:15px"><div class="c"><div class="t" style="font-size:7.8px;line-height:9px;top:0.3999999999999999px;left:1.2999999999999998px;letter-spacing:0px;transform:scaleX(0.84)">78.00</div></div></div>
<div class="lbl" style="left:255px;top:229px;font-size:7.6px;line-height:7.9px;transform:scaleX(0.87)">HUV<br>0.00 VOLTS</div>
<div class="lbl" style="left:235.8px;top:293.8px;font-size:7.3px;line-height:8px;transform:scaleX(0.87)">40.0 PCT</div>
<div class="lbl" style="left:193px;top:267.8px;font-family:'Liberation Serif',serif;font-weight:bold;font-size:8.2px;line-height:9px;color:#282010">VV-5</div>
<div class="lbl" style="left:413.9px;top:328.3px;font-family:'Liberation Serif',serif;font-weight:bold;font-size:6.3px;line-height:7.3px;letter-spacing:0.1px;-webkit-text-stroke:0.3px #001c1c">HUMIDITY SENSOR LOCATED<br>HIGH BAY LOWER WALL.</div>
<div class="lbl" style="left:519.6px;top:309.5px;font-size:7.7px;line-height:8.1px;transform:scaleX(0.875);-webkit-text-stroke:0.25px #001818;color:#001818">RMT<br>NORMAL<br>68.5 DEG F</div>
<div class="lbl" style="left:521px;top:341.2px;font-size:7.7px;line-height:8.1px;transform:scaleX(0.875);-webkit-text-stroke:0.25px #001818;color:#001818">CTL STPT<br>OPER<br>68.00 DEG F</div>
<div class="lbl" style="left:520px;top:371.6px;font-size:7.7px;line-height:8.1px;transform:scaleX(0.875);-webkit-text-stroke:0.25px #001818;color:#001818">HBAY.RMH2<br>NONE<br>2.75 % RH</div>
<div class="lbl" style="left:520.7px;top:401.9px;font-size:7.7px;line-height:8.1px;transform:scaleX(0.875);-webkit-text-stroke:0.25px #001818;color:#001818">RMHS<br>NONE<br>39.63 % RH</div>
<div class="lbl" style="left:625.2px;top:151.8px;font-size:8.3px;line-height:9px;color:#101828;-webkit-text-stroke:0.3px #101828;text-decoration:underline;text-decoration-thickness:0.8px;text-underline-offset:1px;transform:scaleX(0.82)">DOYLE.HB.PTS</div>
<div class="lbl" style="left:118.4px;top:127.6px;font-size:10.4px;line-height:12px;color:#202020">HIGH BAY AREA</div>
<div class="lbl" style="left:483.2px;top:137.8px;font-size:11px;line-height:13px;color:#101010;transform:scaleX(0.93)">BACK</div>
</body></html>
